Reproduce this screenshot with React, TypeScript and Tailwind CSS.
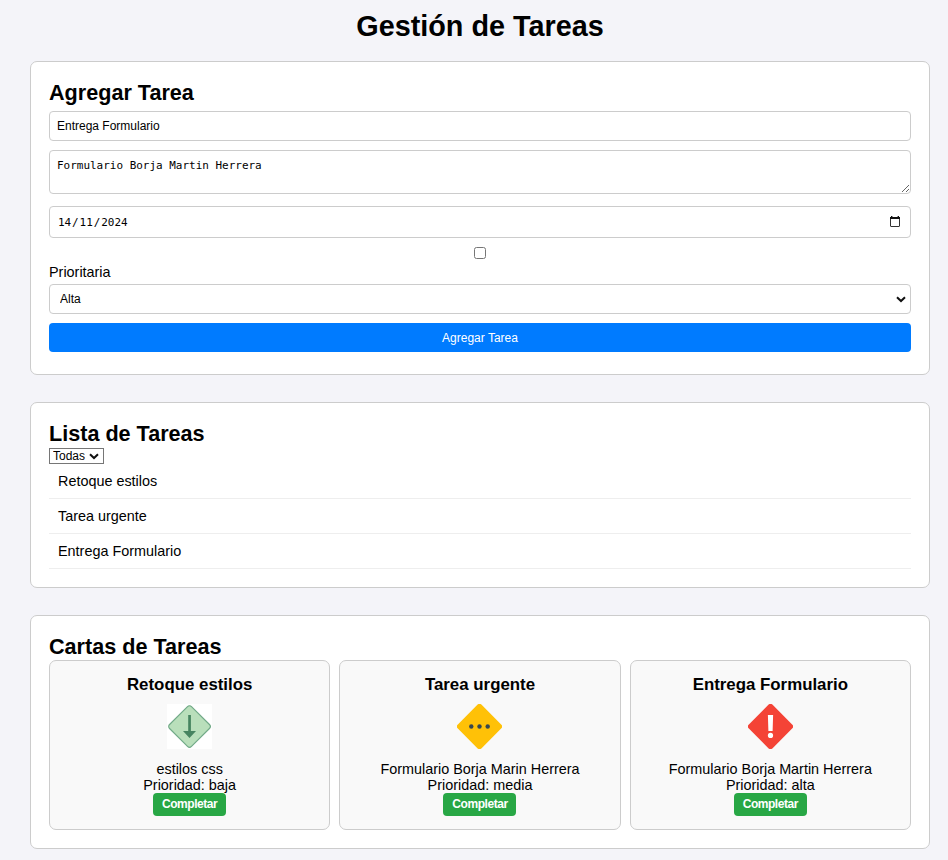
import React from "react";

function Chevron({ className }: { className: string }) {
  return (
    <svg className={className} width="10" height="7" viewBox="0 0 10 7" fill="none">
      <path d="M1 1.2 L5 5 L9 1.2" stroke="#101010" strokeWidth="2" />
    </svg>
  );
}

function LowIcon() {
  return (
    <svg width="45" height="45" viewBox="0 0 45 45">
      <rect width="45" height="45" fill="#fff" />
      <rect x="7" y="7" width="31" height="31" rx="2.8" transform="rotate(45 22.5 22.5)" fill="#b9dfbb" stroke="#72aa88" strokeWidth="1.2" />
      <path d="M21.2 11h2.7v16h5.1l-6.5 7l-6.5 -7h5.2z" fill="#468460" />
    </svg>
  );
}

function MediumIcon() {
  return (
    <svg width="45" height="45" viewBox="0 0 45 45">
      <rect x="5.7" y="5.7" width="33.6" height="33.6" rx="3" transform="rotate(45 22.5 22.5)" fill="#ffc107" />
      <circle cx="14.3" cy="22.5" r="2.2" fill="#37474f" />
      <circle cx="22.5" cy="22.5" r="2.2" fill="#37474f" />
      <circle cx="30.7" cy="22.5" r="2.2" fill="#37474f" />
    </svg>
  );
}

function HighIcon() {
  return (
    <svg width="45" height="45" viewBox="0 0 45 45">
      <rect x="5.7" y="5.7" width="33.6" height="33.6" rx="3" transform="rotate(45 22.5 22.5)" fill="#f44336" />
      <path d="M19.9 11h5.2l-.5 16h-4.2z" fill="#fff" />
      <circle cx="22.5" cy="31.4" r="2.6" fill="#fff" />
    </svg>
  );
}

const tasks = [
  { title: "Retoque estilos", text: "estilos css", priority: "baja", icon: <LowIcon /> },
  { title: "Tarea urgente", text: "Formulario Borja Marin Herrera", priority: "media", icon: <MediumIcon /> },
  { title: "Entrega Formulario", text: "Formulario Borja Martin Herrera", priority: "alta", icon: <HighIcon /> },
];

const heading = "text-[21.6px] leading-[25px] font-bold";
const field = "block w-full rounded-[4px] border border-[#ccc] bg-white outline-none";
const panel = "rounded-[7px] border border-[#ccc] bg-white px-[18px] pt-[18px]";

export default function App() {
  return (
    <div className="h-[860px] overflow-hidden bg-[#f4f4f9] pl-[30px] pr-[18px] pt-[10px] font-['Liberation_Sans',Arial,sans-serif] text-[14.4px] leading-4 text-black">
      <h1 className="h-[51px] text-center text-[28.8px] leading-[33px] font-bold">Gestión de Tareas</h1>

      <section className={`${panel} h-[314px]`}>
        <h2 className={heading}>Agregar Tarea</h2>
        <input className={`${field} mt-[6px] h-[30px] px-[7px] text-[12px]`} defaultValue="Entrega Formulario" />
        <textarea
          className={`${field} mt-[9px] h-[44px] resize px-[7px] pt-[8px] font-['DejaVu_Sans_Mono',monospace] text-[10.97px] leading-[14px]`}
          defaultValue="Formulario Borja Martin Herrera"
        />
        <div className={`${field} mt-[12px] flex h-[32px] items-center justify-between pl-[8px] pr-[10px]`}>
          <span className="pt-px font-['DejaVu_Sans_Mono',monospace] text-[10.97px]">
            14<span className="mx-[0.9px]">/</span>11<span className="mx-[0.9px]">/</span>2024
          </span>
          <svg width="10" height="11" viewBox="0 0 10 11" className="mb-px">
            <path d="M.5 1.5h9v8.5a.5.5 0 0 1-.5.5H1a.5.5 0 0 1-.5-.5z" fill="none" stroke="#333" />
            <path d="M0 1h1V0h1.4v1h5.2V0H9v1h1v2H0z" fill="#111" />
          </svg>
        </div>
        <input type="checkbox" className="mx-auto mt-[9px] block size-[12px]" />
        <label className="mt-[5px] block">Prioritaria</label>
        <div className="relative mt-[4px]">
          <select className={`${field} h-[30px] appearance-none pl-[10px] text-[12px]`}>
            <option>Alta</option>
            <option>Media</option>
            <option>Baja</option>
          </select>
          <Chevron className="absolute right-[5px] top-[12px]" />
        </div>
        <button className="mt-[9px] block h-[29px] w-full rounded-[4px] bg-[#007bff] text-[12px] text-white">Agregar Tarea</button>
      </section>

      <section className={`${panel} mt-[27px] h-[186px]`}>
        <h2 className={heading}>Lista de Tareas</h2>
        <div className="relative mt-[2px] w-[55px]">
          <select className="block h-[16px] w-full appearance-none border border-[#767676] bg-white pl-[3px] text-[12px] leading-[14px]">
            <option>Todas</option>
            <option>Completadas</option>
          </select>
          <Chevron className="absolute right-[5px] top-[5px]" />
        </div>
        <ul>
          {tasks.map((task) => (
            <li key={task.title} className="h-[35px] border-b border-[#eee] pl-[9px] pt-[9px]">
              {task.title}
            </li>
          ))}
        </ul>
      </section>

      <section className={`${panel} mt-[27px] h-[234px]`}>
        <h2 className={heading}>Cartas de Tareas</h2>
        <div className="mt-px grid grid-cols-3 gap-[9px]">
          {tasks.map((task) => (
            <article key={task.title} className="flex h-[170px] flex-col items-center rounded-[7px] border border-[#ccc] bg-[#f9f9f9] pt-[14px]">
              <h3 className="text-[16.85px] leading-5 font-bold">{task.title}</h3>
              <div className="mt-[9px] h-[45px]">{task.icon}</div>
              <p className="mt-[12px]">{task.text}</p>
              <p>Prioridad: {task.priority}</p>
              <button className="h-[23px] w-[73px] rounded-[4px] bg-[#28a745] pb-px text-[12px] font-bold tracking-[-0.45px] text-white">Completar</button>
            </article>
          ))}
        </div>
      </section>
    </div>
  );
}
